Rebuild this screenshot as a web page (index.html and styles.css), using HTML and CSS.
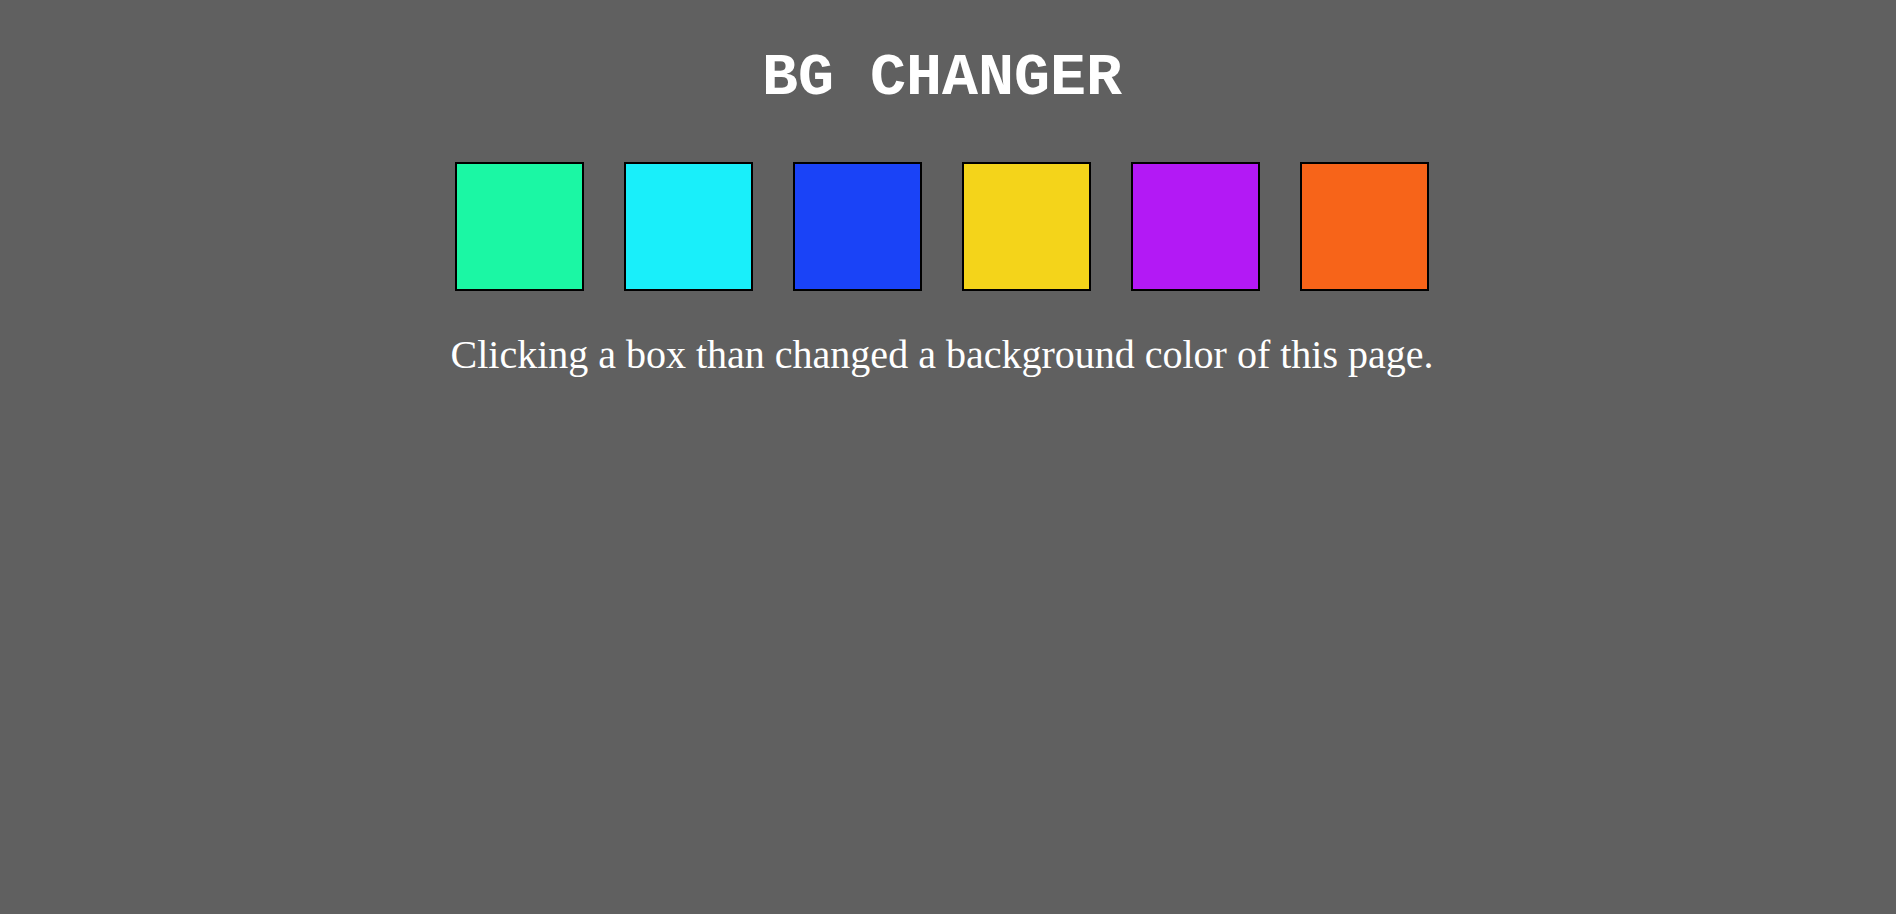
FILE: index.html
```html
<!DOCTYPE html>
<html>
<head>
<meta charset="utf-8">
<title>BG Changer</title>
<link rel="stylesheet" href="styles.css">
</head>
<body>
<main class="page">
  <h1 class="title">BG CHANGER</h1>
  <div class="swatches">
    <div class="swatch green"></div>
    <div class="swatch cyan"></div>
    <div class="swatch blue"></div>
    <div class="swatch yellow"></div>
    <div class="swatch purple"></div>
    <div class="swatch orange"></div>
  </div>
  <p class="hint">Clicking a box than changed a background color of this page.</p>
</main>
</body>
</html>
```
FILE: styles.css
```css
html, body {
  margin: 0;
  padding: 0;
  background: #606060;
}
.page {
  display: flex;
  flex-direction: column;
  align-items: center;
  padding-right: 12px;
  color: #ffffff;
}
.title {
  margin: 44px 0 0;
  font-family: "Liberation Mono", "Courier New", monospace;
  font-weight: bold;
  font-size: 60px;
  line-height: 68px;
}
.swatches {
  display: flex;
  gap: 40px;
  margin-top: 50px;
}
.swatch {
  width: 125px;
  height: 125px;
  border: 2px solid #000;
}
.green { background: #1bf7a4; }
.cyan { background: #19effa; }
.blue { background: #1a43f7; }
.yellow { background: #f4d41a; }
.purple { background: #b319f5; }
.orange { background: #f76419; }
.hint {
  margin: 41px 0 0;
  font-family: "Liberation Serif", "Times New Roman", serif;
  font-size: 40px;
  line-height: 46px;
}
```
